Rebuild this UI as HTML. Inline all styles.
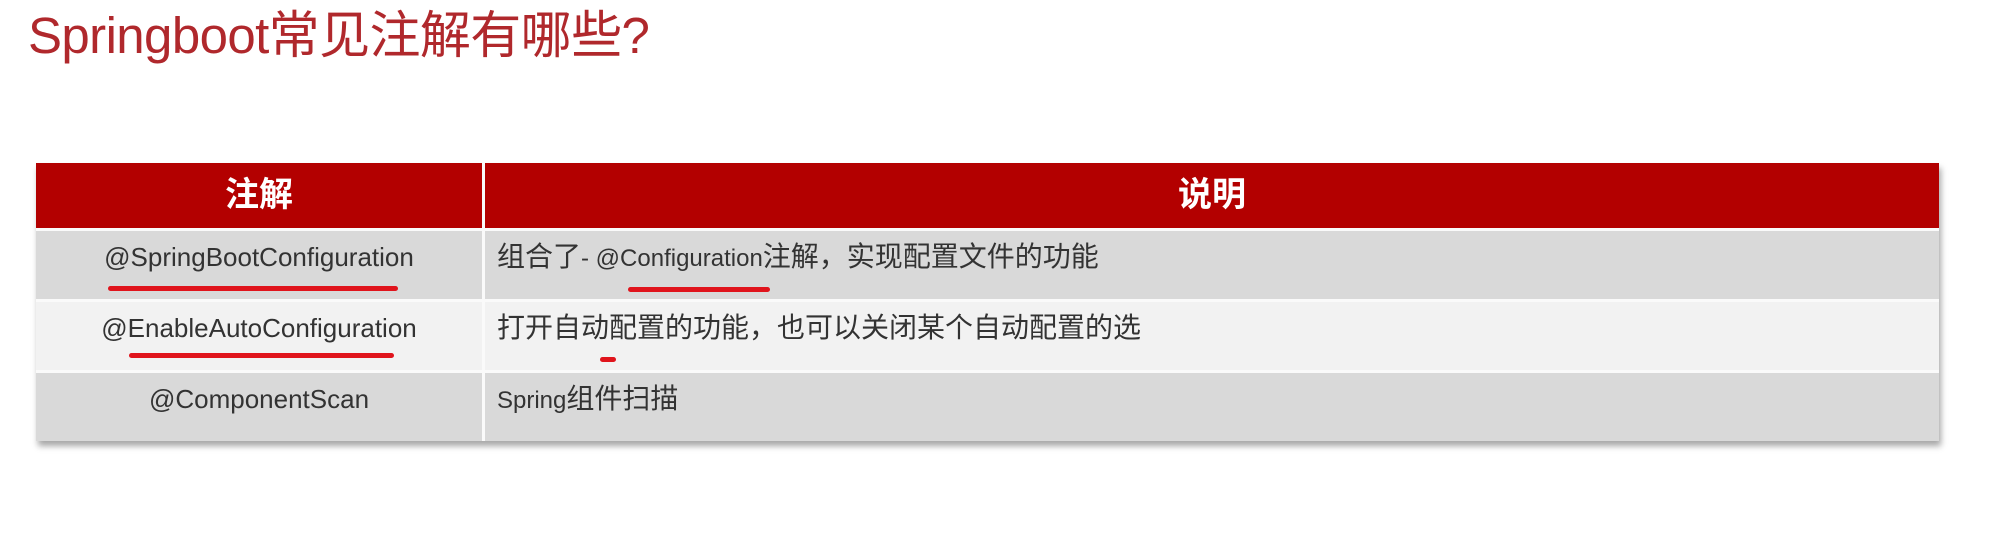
<!DOCTYPE html>
<html><head><meta charset="utf-8"><style>
body{margin:0;width:2001px;height:544px;background:#fff;position:relative;overflow:hidden;font-family:"Liberation Sans","Noto Sans CJK SC",sans-serif}
.title{position:absolute;left:28px;top:4px;font-size:51px;color:#b0282c;line-height:64px;letter-spacing:-0.6px}
.tbl{position:absolute;left:36px;top:163px;width:1903px;box-shadow:2px 5px 6px rgba(0,0,0,.35)}
.row{display:flex;border-bottom:3px solid #fafafa}
.c1{width:446px;border-right:3px solid #fafafa;text-align:center}
.c2{flex:1;padding-left:12px;font-size:28px;white-space:nowrap}
.c2 span{font-size:24px}
.hd{background:#b30000;color:#fff;font-weight:bold;font-size:34px;height:65px;line-height:65px}
.hd .c2{text-align:center;padding-left:0;font-size:34px}
.r{font-size:26px;color:#333;height:68px;line-height:52px}
.g{background:#d9d9d9}.l{background:#f2f2f2}
.u{position:absolute;height:5px;background:#e0141c;border-radius:3px}
</style></head><body>
<div class="title">Springboot常见注解有哪些?</div>
<div class="tbl">
<div class="row hd"><div class="c1">注解</div><div class="c2">说明</div></div>
<div class="row r g"><div class="c1">@SpringBootConfiguration</div><div class="c2">组合了<span>- @Configuration</span>注解，实现配置文件的功能</div></div>
<div class="row r l"><div class="c1">@EnableAutoConfiguration</div><div class="c2">打开自动配置的功能，也可以关闭某个自动配置的选</div></div>
<div class="row r g" style="border-bottom:0"><div class="c1">@ComponentScan</div><div class="c2"><span>Spring</span>组件扫描</div></div>
</div>
<div class="u" style="left:108px;top:286px;width:290px"></div>
<div class="u" style="left:628px;top:287px;width:142px"></div>
<div class="u" style="left:129px;top:353px;width:265px"></div>
<div class="u" style="left:600px;top:357px;width:16px"></div>
</body></html>
